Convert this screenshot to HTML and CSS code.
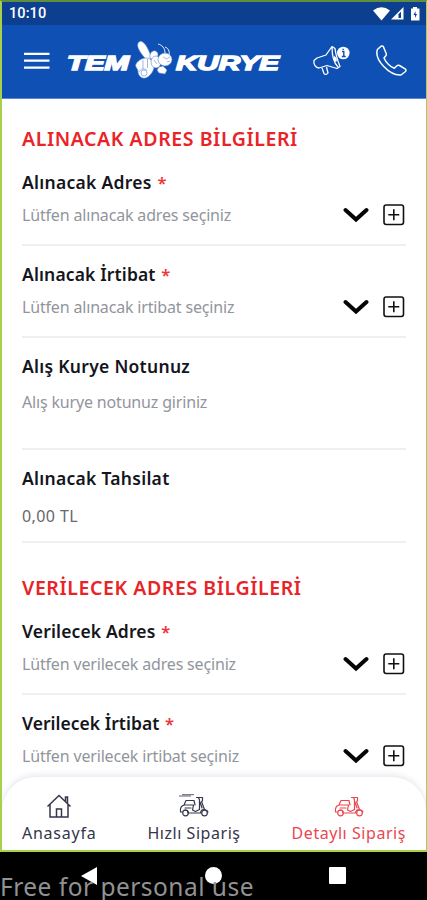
FILE: index.html
```html
<!DOCTYPE html>
<html lang="tr">
<head>
<meta charset="utf-8">
<title>Tem Kurye</title>
<link rel="stylesheet" href="styles.css">
</head>
<body>
<svg class="defs" width="0" height="0">
  <symbol id="chevron" viewBox="0 0 26 16"><path d="M2.5 3 13 12.5 23.5 3" fill="none" stroke="#050505" stroke-width="4" stroke-linecap="round"/></symbol>
  <symbol id="plus" viewBox="0 0 22 22"><rect x="1" y="1" width="19.5" height="19.5" rx="2.2" fill="none" stroke="#111" stroke-width="1.6"/><path d="M10.8 5.3v11M5.3 10.8h11" stroke="#111" stroke-width="1.6"/></symbol>
  <symbol id="scooter" viewBox="0 0 30 22"><g fill="none" stroke="currentColor" stroke-width="1.2" stroke-linejoin="round" stroke-linecap="round"><circle cx="6.5" cy="18" r="2.800"/><circle cx="25.5" cy="18" r="2.800"/><path d="M3 17H1.5c-.5-4 1-6.500 4-7h9l-1 5 3 1.500 4-2V5l-1-2.500h4V6l-1 .5 3 8c2 .2 3 1 3.500 2.500M9.500 18h12c.3-2.500 1.500-3.500 3.500-3.500M5 10l2-4.500h8l1 4.500M6 13h6M19.500 2.500h-2M9 18c0-2-1-3-3-3M21 7l2 6"/></g></symbol>
</svg>
<div class="screen">
  <div class="status">
    <span>10:10</span>
    <svg width="48" height="16" viewBox="0 0 48 16" fill="#fff"><path d="M0 4.500Q8.500-2 17 4.500L8.500 14.500Z"/><path d="M30.500 1v12.500H18Z"/><path d="M28 5.500v6.500h-2.500V8.200Z" fill="#0d3f91"/><path d="M38 2.500h2V1h4v1.500h2.500v12H38Z"/><path d="M42.500 5 40.500 9h1.500v3l2-4h-1.500Z" fill="#0d3f91"/></svg>
  </div>
  <header class="bar">
    <svg class="menu" width="26" height="18" viewBox="0 0 26 18"><path d="M0 1.800h25.500M0 8.700h25.500M0 15.600h25.500" stroke="#fff" stroke-width="2.200"/></svg>
    <svg class="logo" width="216" height="42" viewBox="0 0 216 42">
      <g class="wordmark"><text x="1" y="29.500" textLength="62" lengthAdjust="spacingAndGlyphs">TEM</text><text x="110" y="29.500" textLength="103" lengthAdjust="spacingAndGlyphs">KURYE</text></g>
      <g fill="#fff" stroke="#5b86d0" stroke-width=".6">
        <path d="M83 22C74 14 69 5 73 2c3-3 9 4 12 15Z"/>
        <path d="M84 18c-1-6 4-9 7-6 2 2 1 6-3 9Z"/>
        <path d="M80 18c-6 0-12 6-10 9 1 2 2 2 2 5 1 7 8 8 12 3 4-4 5-9 3-13-2-3-4-4-7-4Z"/>
        <path d="M77 20v9M81.500 19v9M73 32c1-3 5-4 8-2" fill="none"/><circle cx="78" cy="33" r="3"/>
        <ellipse cx="90" cy="22" rx="5" ry="6"/><ellipse cx="99" cy="19.500" rx="7" ry="6.500"/>
        <path d="M93 27l4-1 4 4-2 4-6-1-2-3Z"/><path d="m97 17 4 2 3-2M101 22l3-1M88 20l3 4" fill="none"/>
      </g>
      <path d="M99 13c0-5-3-8-7-9M103 15c1-4-1-7-4-8" fill="none" stroke="#fff" stroke-width=".9"/>
    </svg>
    <svg class="horn" width="38" height="32" viewBox="0 0 38 32"><g fill="none" stroke="#fff" stroke-width="1.300" stroke-linejoin="round"><path d="M2 15.500 5 13l9-3 6-8.500 3 2c1 8 3 13 5 18l-3 2-10-3-8 2.500c-3 0-6-4-5-7.500ZM10 23l2 5.500c1 1.500 3 1 4-.5l-1.500-6M20 2c0 9 2 16 6 20"/></g><path d="M22 11q4 2 2.500 5.500L22 17Z" fill="#fff"/><circle cx="31.300" cy="8" r="6.300" fill="#fff"/><path d="M30 6.500h1.800v5M29.800 11.500h4M31.200 3.800v1.300" stroke="#0f50b4" stroke-width="1.400" fill="none"/></svg>
    <svg class="phone" width="32" height="32" viewBox="0 0 32 32"><path d="M6 1.200 2.400 4.500C-1 15 15 31 26 30l4.500-3.500c.6-.7.500-1.500 0-2.300l-6-3.700c-1-.5-2-.4-2.600.3l-2.600 2.500c-4-1.300-8.500-6-10.300-10.300l2-2.500c.5-.8.500-1.500 0-2.500L8.300 1.500C7.600.8 6.800.8 6 1.200Z" fill="none" stroke="#fff" stroke-width="1.500" stroke-linejoin="round"/></svg>
  </header>
  <main class="form">
    <h2 class="t1">ALINACAK ADRES BİLGİLERİ</h2>
    <div class="field"><label>Alınacak Adres <b>*</b></label><div class="row"><span>Lütfen alınacak adres seçiniz</span><svg width="26" height="16"><use href="#chevron"/></svg><svg width="22" height="22"><use href="#plus"/></svg></div></div>
    <div class="field"><label class="tight">Alınacak İrtibat <b>*</b></label><div class="row"><span>Lütfen alınacak irtibat seçiniz</span><svg width="26" height="16"><use href="#chevron"/></svg><svg width="22" height="22"><use href="#plus"/></svg></div></div>
    <div class="field note"><label>Alış Kurye Notunuz</label><div class="row"><span>Alış kurye notunuz giriniz</span></div></div>
    <div class="field amount"><label>Alınacak Tahsilat</label><div class="row"><span>0,00 TL</span></div></div>
    <h2 class="t2">VERİLECEK ADRES BİLGİLERİ</h2>
    <div class="field"><label class="tight">Verilecek Adres <b>*</b></label><div class="row"><span>Lütfen verilecek adres seçiniz</span><svg width="26" height="16"><use href="#chevron"/></svg><svg width="22" height="22"><use href="#plus"/></svg></div></div>
    <div class="field"><label class="tighter">Verilecek İrtibat <b>*</b></label><div class="row"><span>Lütfen verilecek irtibat seçiniz</span><svg width="26" height="16"><use href="#chevron"/></svg><svg width="22" height="22"><use href="#plus"/></svg></div></div>
  </main>
  <nav class="tabs">
    <a class="home"><svg width="26" height="24" viewBox="0 0 26 24"><path d="M1.500 12.500 13 1.500l11.500 11M4 10.500V23h18V10.500M10.500 23v-8h5v8M19.500 7V3h2v6" fill="none" stroke="currentColor" stroke-width="1.500"/></svg><span>Anasayfa</span></a>
    <a class="quick"><svg width="30" height="24" viewBox="0 0 30 24"><path d="M0 2h12M3 .7h12" stroke="currentColor" stroke-width=".8"/><use href="#scooter" x="0" y="1" width="30" height="22"/></svg><span>Hızlı Sipariş</span></a>
    <a class="detail"><svg width="30" height="24"><use href="#scooter" x="0" y="1" width="30" height="22"/></svg><span>Detaylı Sipariş</span></a>
  </nav>
</div>
<footer class="system">
  <svg class="back" width="16" height="18"><path d="M0 9 16 0v18Z" fill="#fff"/></svg>
  <i class="circle"></i><i class="square"></i>
  <span class="mark">Free for personal use</span>
</footer>
</body>
</html>
```
FILE: styles.css
```css
* { box-sizing: border-box; }
body { margin: 0; width: 427px; height: 900px; overflow: hidden; background: #000; font-family: "Noto Sans", sans-serif; }
svg { display: block; flex: none; }
.defs { position: absolute; }
.screen { height: 852px; display: flex; flex-direction: column; background: #fff; border: 2px solid #a8d14b; border-top-color: #5f8f3c; border-right-width: 1px; overflow: hidden; }
.status { flex: none; height: 23px; padding: 0 5px 0 7px; display: flex; align-items: center; justify-content: space-between; background: #0d3f91; color: #fff; font: 500 14.500px/22px Roboto, sans-serif; letter-spacing: .1px; }
.bar { flex: none; height: 74px; background: #0f50b4; display: flex; align-items: flex-start; padding-left: 22px; border-bottom: 1px solid #5c88cf; }
.menu { margin-top: 27px; }
.logo { margin: 15px 0 0 16px; }
.wordmark { font: italic bold 20px "Liberation Sans", sans-serif; fill: #fff; stroke: #fff; stroke-width: 1.500px; }
.horn { margin: 20px 0 0 30px; }
.phone { margin: 20px 0 0 25px; }
.form { flex: 1; min-height: 0; overflow: hidden; padding: 0 20px; }
h2 { margin: 0; color: #e92328; font-size: 19.500px; font-weight: 600; line-height: 22px; letter-spacing: .58px; white-space: nowrap; }
.t1 { padding: 29px 0 4px; }
.t2 { padding: 34px 0 4px; }
.field { height: 92px; padding-top: 17px; border-bottom: 2px solid #edf0f1; }
label { display: block; line-height: 22px; font-size: 17.500px; font-weight: 600; letter-spacing: .28px; color: #15151c; white-space: nowrap; }
.tight { letter-spacing: .14px; }
.tighter { letter-spacing: .02px; }
label b { color: #ed343b; font-size: 16.500px; font-weight: 600; line-height: 1; margin-left: 1px; }
.row { margin-top: 11px; padding-right: 1px; height: 22px; display: flex; align-items: center; gap: 14px; color: #92959c; font-size: 16px; letter-spacing: -.17px; line-height: 22px; white-space: nowrap; }
.row span { flex: 1; }
.note { height: 112px; }
.note .row { margin-top: 14px; }
.amount { height: 93px; }
.amount .row { margin-top: 16px; color: #66686d; letter-spacing: .4px; }
.tabs { flex: none; height: 73px; border-radius: 34px 34px 0 0; background: #fff; box-shadow: 0 -2px 6px #e4e7ec; display: flex; justify-content: space-between; padding: 17px 20px 0; color: #34364c; }
.tabs a { display: flex; flex-direction: column; align-items: center; font-size: 16px; line-height: 22px; letter-spacing: .55px; white-space: nowrap; }
.tabs span { margin-top: 4px; }
.tabs .home { letter-spacing: .75px; }
.detail { color: #ea4650; }
.system { position: relative; height: 48px; background: #000; overflow: hidden; display: flex; align-items: flex-start; padding-left: 81px; }
.back { margin-top: 15px; }
.circle { width: 17px; height: 17px; border-radius: 50%; background: #fff; margin: 15px 0 0 108px; }
.square { width: 17px; height: 17px; border-radius: 1px; background: #fff; margin: 15px 0 0 107px; }
.mark { position: absolute; left: 0; top: 22px; font: 24.500px/26px "Noto Sans", sans-serif; letter-spacing: .48px; color: #929292; white-space: nowrap; }
```
